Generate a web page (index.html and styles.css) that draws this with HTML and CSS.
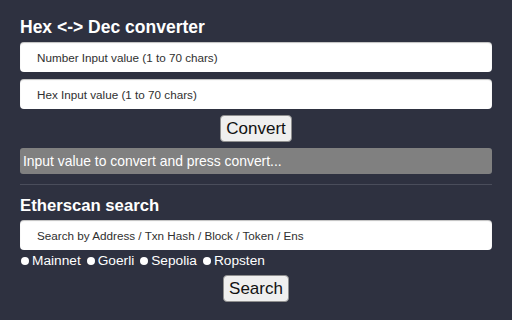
FILE: index.html
```html
<!DOCTYPE html>
<html>
<head>
<meta charset="utf-8">
<link rel="stylesheet" href="styles.css">
</head>
<body>
<main class="page">
  <h2 class="title">Hex &lt;-&gt; Dec converter</h2>
  <input class="field" type="text" placeholder="Number Input value (1 to 70 chars)">
  <input class="field" type="text" placeholder="Hex Input value (1 to 70 chars)">
  <div class="btn-row"><button class="btn">Convert</button></div>
  <div class="status">Input value to convert and press convert...</div>
  <hr class="divider">
  <h2 class="title title-2">Etherscan search</h2>
  <input class="field" type="text" placeholder="Search by Address / Txn Hash / Block / Token / Ens">
  <div class="radios">
    <label class="radio"><span class="dot"></span>Mainnet</label>
    <label class="radio"><span class="dot"></span>Goerli</label>
    <label class="radio"><span class="dot"></span>Sepolia</label>
    <label class="radio"><span class="dot"></span>Ropsten</label>
  </div>
  <div class="btn-row"><button class="btn btn-search">Search</button></div>
</main>
</body>
</html>
```
FILE: styles.css
```css
html, body {
  margin: 0;
  padding: 0;
  background: #2e3140;
}
body {
  font-family: "Liberation Sans", Arial, sans-serif;
  color: #ffffff;
}
.page {
  width: 472px;
  padding: 17px 20px 0 20px;
  display: flex;
  flex-direction: column;
}
.title {
  margin: 0 0 5px 0;
  font-size: 17.5px;
  line-height: 20px;
  font-weight: bold;
  color: #ffffff;
}
.title-2 {
  font-size: 16.7px;
  margin-bottom: 4px;
}
.field {
  box-sizing: border-box;
  width: 472px;
  height: 30px;
  margin: 0 0 7px 0;
  padding: 0 0 0 17px;
  border: none;
  border-radius: 4px;
  background: #ffffff;
  box-shadow: inset 0 1px 1px rgba(0,0,0,0.25);
  font-family: "Liberation Sans", Arial, sans-serif;
  font-size: 11.7px;
  color: #222;
  outline: none;
}
.field::placeholder {
  color: #303030;
}
.btn-row {
  display: flex;
  justify-content: center;
}
.btn {
  height: 27px;
  padding: 0 5px;
  margin: -1px 0 6px 0;
  border: 1px solid #8f8f8f;
  border-radius: 4px;
  background: #efefef;
  font-family: "Liberation Sans", Arial, sans-serif;
  font-size: 17px;
  color: #111;
}
.status {
  box-sizing: border-box;
  height: 26px;
  padding: 0 3px;
  border-radius: 3px;
  background: #808080;
  color: #ffffff;
  font-size: 13.9px;
  line-height: 26px;
}
.divider {
  width: 472px;
  margin: 10px 0 11px 0;
  border: none;
  height: 1px;
  background: #4a4d5b;
}
.radios {
  display: flex;
  gap: 5px;
  margin: -4px 0 6px 0;
  height: 16px;
  align-items: center;
}
.radio {
  display: flex;
  align-items: center;
  gap: 3px;
  font-size: 13.7px;
  line-height: 16px;
  color: #ffffff;
}
.dot {
  width: 8px;
  height: 8px;
  margin-left: 1px;
  border-radius: 50%;
  background: #ffffff;
}
.btn-search {
  margin: 0;
}
```
